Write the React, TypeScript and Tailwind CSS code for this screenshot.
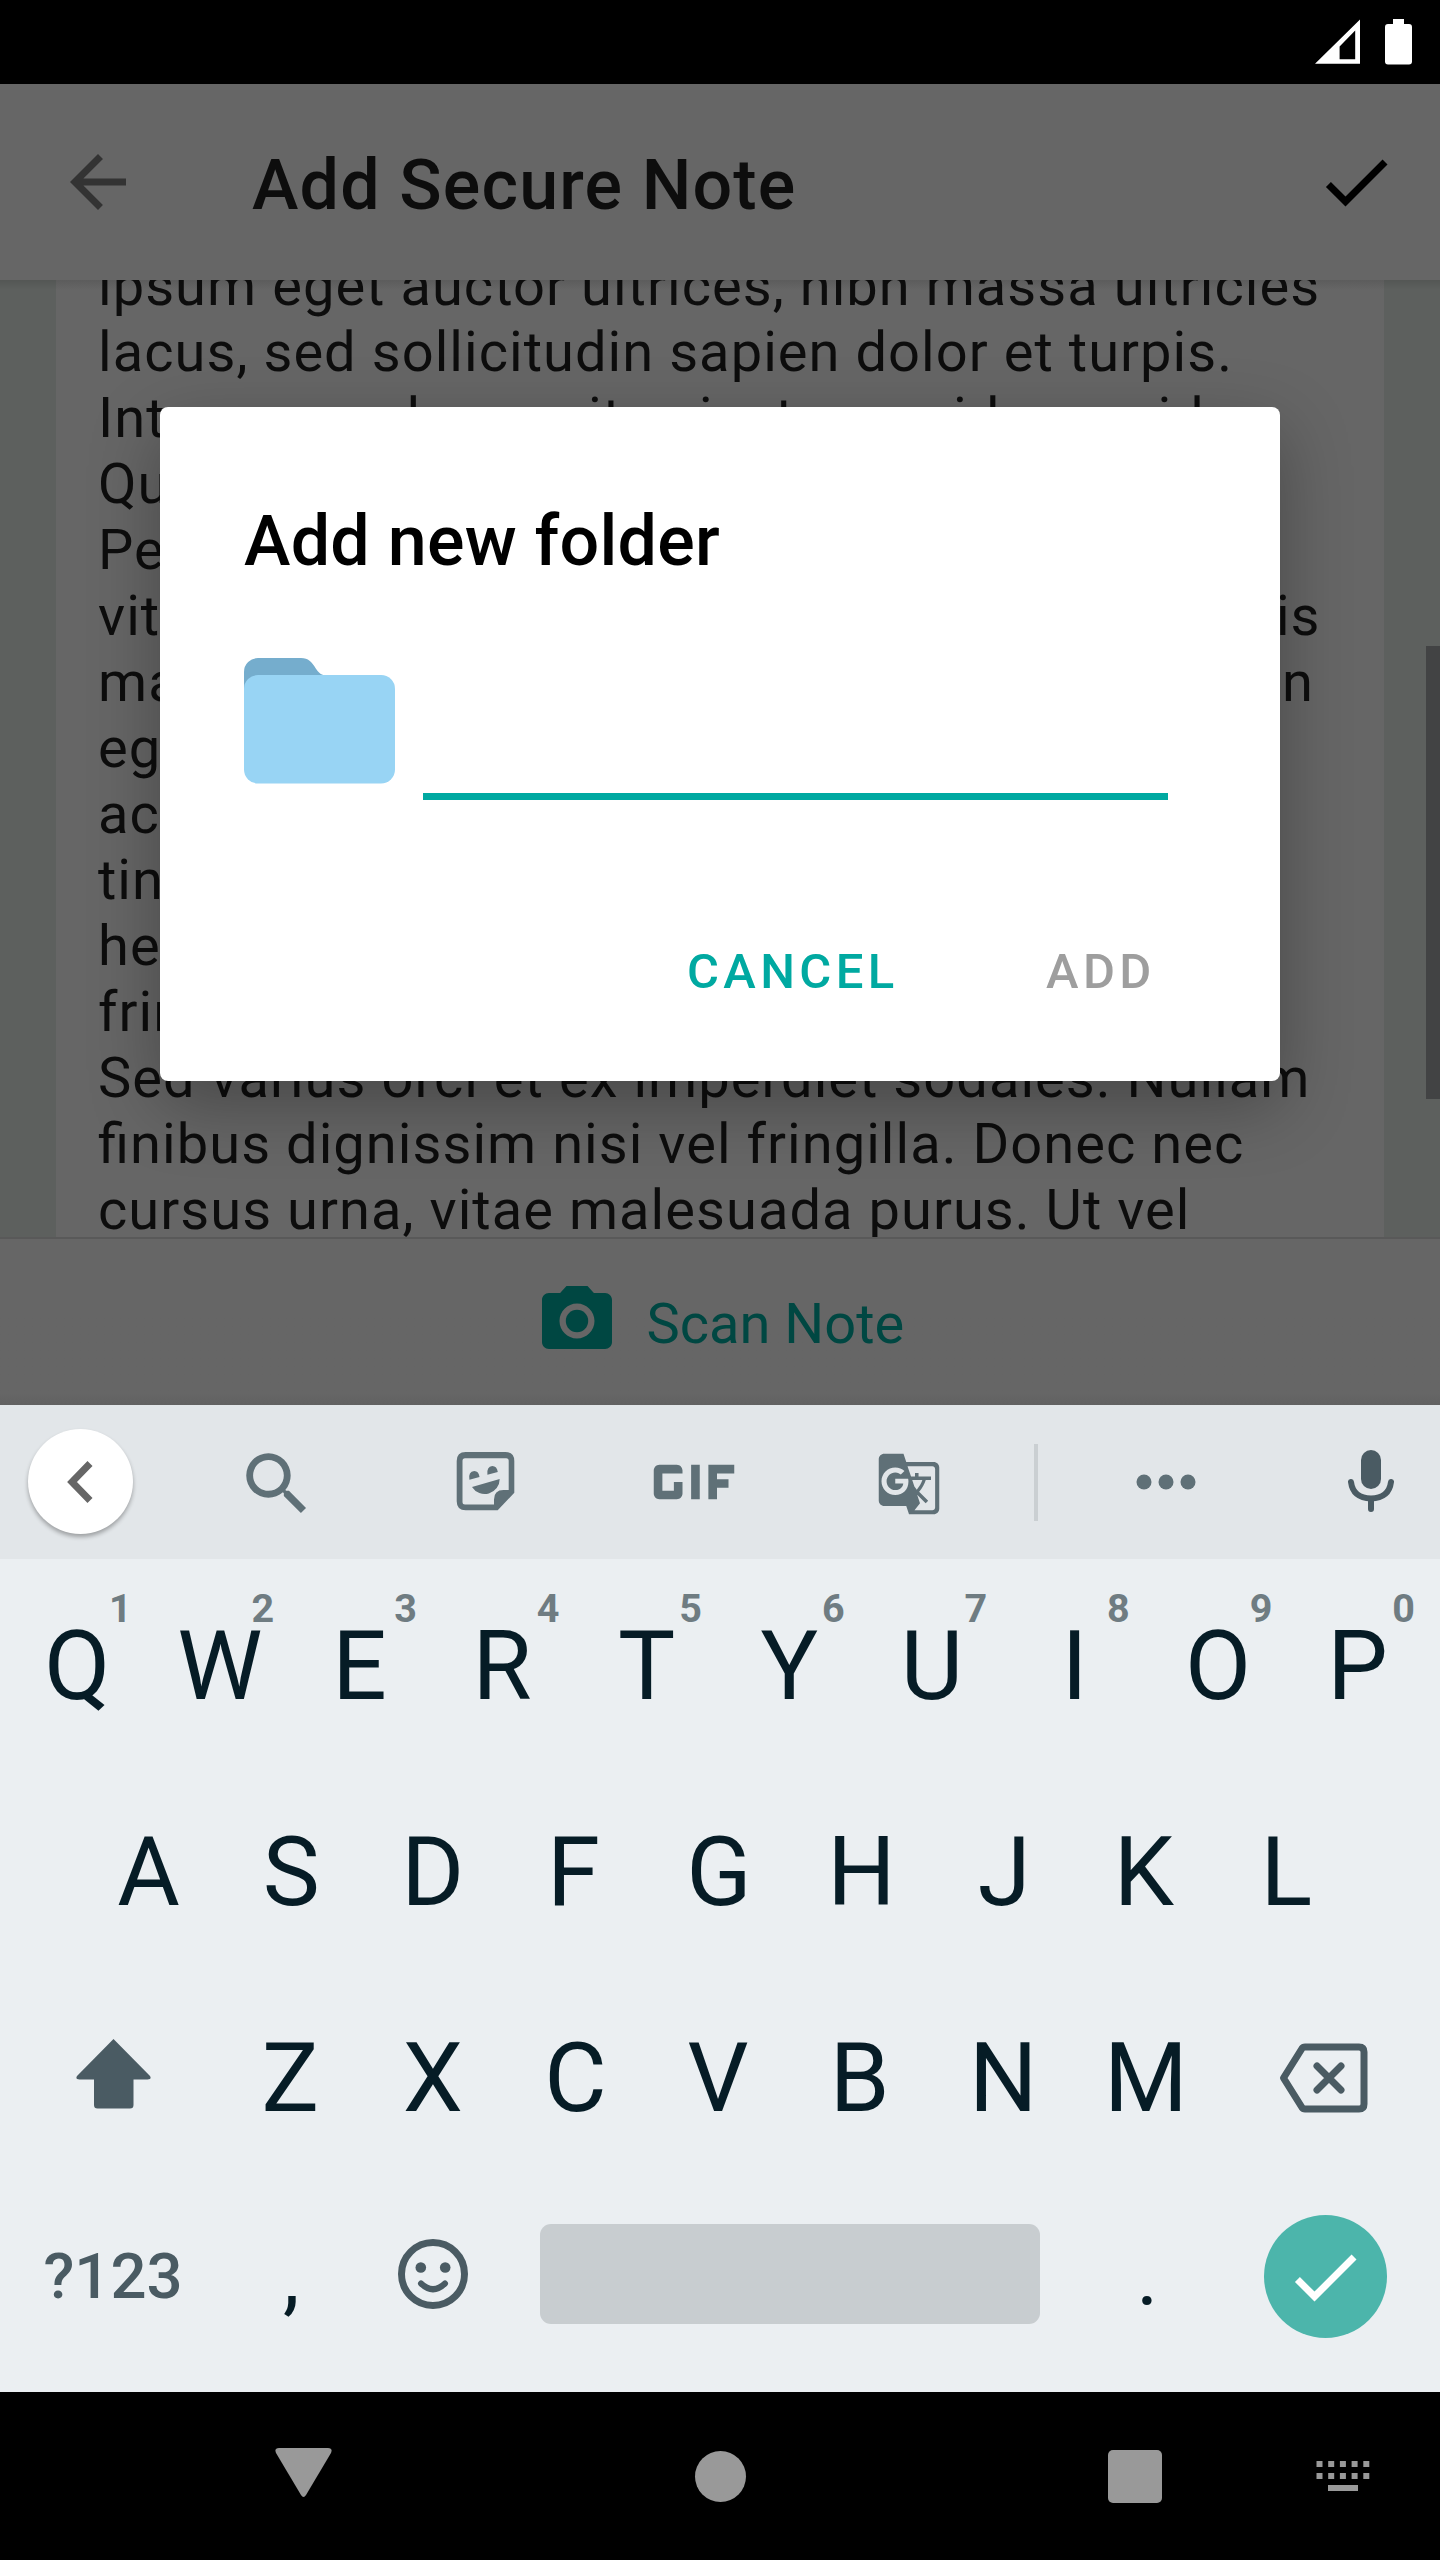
import React from 'react';
import { MdGif, MdGTranslate, MdSearch } from 'react-icons/md';

const LINES_TOP = [
  'ipsum eget auctor ultrices, nibh massa ultricies',
  'lacus, sed sollicitudin sapien dolor et turpis.',
  'Integer non lacus vitae justo gravida gravida',
  'Quisque',
  'Pellen',
];

const LINES_BOTTOM = [
  'eget',
  'ac',
  'tincidunt',
  'hendrerit',
  'fringilla',
  'Sed varius orci et ex imperdiet sodales. Nullam',
  'finibus dignissim nisi vel fringilla. Donec nec',
  'cursus urna, vitae malesuada purus. Ut vel',
];

const CHECK = 'M9 16.17L4.83 12l-1.42 1.41L9 19 21 7l-1.41-1.41z';

function StatusBar() {
  return (
    <header className="flex h-[84px] shrink-0 items-start justify-end bg-black pr-[28px] pt-[19px] text-white">
      <svg className="mr-[25px] h-[45px] w-[45px]" viewBox="0 0 45 45" fill="currentColor">
        <path fillRule="evenodd" d="M45 0.5V44.7H0ZM40.2 11.5L24.6 27.5V40.2H40.2Z" />
      </svg>
      <svg className="h-[46px] w-[27px]" viewBox="0 0 27 46" fill="currentColor">
        <path d="M8 0h11v5h5a3 3 0 0 1 3 3v34.500a3 3 0 0 1-3 3H3a3 3 0 0 1-3-3V8a3 3 0 0 1 3-3h5z" />
      </svg>
    </header>
  );
}

function Note() {
  return (
    <section className="relative h-[957px] shrink-0 overflow-hidden bg-[#5d605e] px-[56px]">
      <div className="h-full overflow-hidden bg-[#666666] pl-[42px]">
        <div className="-mt-[27px] text-[56px] leading-[66px] tracking-[1.050px] text-[#0d0d0d] [font-feature-settings:'liga'_1]">
          {LINES_TOP.map((l) => (
            <p key={l} className="whitespace-nowrap">{l}</p>
          ))}
          <p className="flex w-[1222.500px] justify-between"><span>vita</span><span>is</span></p>
          <p className="flex w-[1216px] justify-between"><span>mat</span><span>n</span></p>
          {LINES_BOTTOM.map((l) => (
            <p key={l} className="whitespace-nowrap">{l}</p>
          ))}
        </div>
      </div>
      <div className="absolute inset-x-0 top-0 h-[10px] bg-linear-to-b from-black/10 to-transparent" />
      <div className="absolute right-0 top-[366px] h-[453px] w-[14px] bg-[#424344]" />
    </section>
  );
}

function Dialog() {
  return (
    <div className="absolute left-[160px] top-[407px] flex h-[674px] w-[1120px] flex-col rounded-[8px] bg-white pl-[84px] shadow-[0_24px_70px_rgba(0,0,0,0.3)]">
      <h2 className="mt-[93px] text-[70px] font-medium leading-[82px] tracking-[0.250px] text-black">Add new folder</h2>
      <div className="mt-[76px] flex h-[142px] items-start">
        <svg className="h-[126px] w-[151px]" viewBox="0 0 151 126">
          <path d="M0 40V14A14 14 0 0 1 14 0H57C72 0 70 17 82 17.500V40Z" fill="#75adcd" />
          <rect y="17" width="151" height="108.500" rx="14" fill="#98d4f4" />
        </svg>
        <div className="ml-[28px] h-full w-[745px] border-b-[7px] border-[#00a9a1]" />
      </div>
      <div className="mt-[143px] flex gap-[147.500px] pl-[443px] text-[49px] font-medium leading-[58px] tracking-[4.370px]">
        <span className="text-[#00a9a1]">CANCEL</span>
        <span className="text-[#9e9e9e]">ADD</span>
      </div>
    </div>
  );
}

function Tools() {
  return (
    <div className="flex h-[154px] shrink-0 items-center bg-[#e2e6e9] pl-[28px] text-[#5f7077]">
      <div className="-mt-px flex h-[105px] w-[105px] items-center justify-center rounded-full bg-white text-[#666666] shadow-[0_3px_4px_rgba(0,0,0,0.3)]">
        <svg className="mr-[2px] h-[42px] w-[26px]" viewBox="0 0 26 42" fill="none" stroke="currentColor" strokeWidth="7">
          <path d="M23 2.500L5 21L23 39.500" />
        </svg>
      </div>
      <div className="ml-[103px] mt-[4px]">
        <MdSearch className="h-[82px] w-[82px]" />
      </div>
      <svg className="-mt-px ml-[135px] h-[64px] w-[64px] shrink-0" viewBox="0 0 64 64" fill="currentColor">
        <path fillRule="evenodd" d="M12.700 2H52.300Q61.300 2 61.300 11V42.700L44.700 60.300H12.700Q3.700 60.300 3.700 51.300V11Q3.700 2 12.700 2ZM12 8.300Q9.500 8.300 9.500 10.800V52Q9.500 54.500 12 54.500H41V49.500Q41 40 50.500 40H55.700V10.800Q55.700 8.300 53.200 8.300Z" />
        <path d="M16.400 29.700Q15 21.500 21.300 21Q25.800 21 26.500 27ZM34.400 24.700Q33.500 16.500 39.300 16Q44 16 44.800 22ZM46.700 29A15 15 0 0 1 19 37Z" />
      </svg>
      <div className="-mt-px ml-[136.500px] flex h-[34px] w-[81px] items-center justify-center">
        <MdGif className="h-[138px] w-[138px] shrink-0" />
      </div>
      <div className="ml-[141.500px] mt-[3px]">
        <MdGTranslate className="h-[66px] w-[66px]" />
      </div>
      <div className="ml-[92px] h-[77px] w-[4px] bg-[#cacfd2]" />
      <svg className="ml-[98px] h-[16px] w-[60px]" viewBox="0 0 60 16" fill="currentColor">
        <circle cx="8" cy="8" r="7.500" /><circle cx="30" cy="8" r="7.500" /><circle cx="52" cy="8" r="7.500" />
      </svg>
      <svg className="-mt-[2px] ml-[152px] h-[62px] w-[46px] text-[#4a5b63]" viewBox="0 0 46 62" fill="none" stroke="currentColor" strokeWidth="6" strokeLinecap="round">
        <rect x="13" y="0" width="20" height="39" rx="10" fill="currentColor" stroke="none" />
        <path d="M3 32Q5 48 23 48.500Q41 48 43 32M23 49V59" />
      </svg>
    </div>
  );
}

function Keys({ letters }: { letters: string }) {
  return (
    <>
      {letters.split('').map((c) => (
        <span
          key={c}
          className={`w-[142.600px] shrink-0 text-center ${'EFKRLP'.includes(c) ? 'pr-[6px]' : 'DBTYUI'.includes(c) ? 'pr-[2px]' : ''}`}
        >
          {c}
        </span>
      ))}
    </>
  );
}

function Keyboard() {
  return (
    <div className="flex h-[833px] shrink-0 flex-col bg-[#ebeff2] px-[6px] text-[96px] leading-[112px] text-[#061c26]">
      <div className="flex h-[45px] pl-[43px] pt-[27px] text-[39.500px] font-bold leading-[46px] text-[#6f7c82]">
        <Keys letters="1234567890" />
      </div>
      <div className="mt-[6px] flex h-[112px]"><Keys letters="QWERTYUIOP" /></div>
      <div className="mt-[94px] flex h-[112px] justify-center pr-[2px]"><Keys letters="ASDFGHJKL" /></div>
      <div className="mt-[94px] flex h-[112px]">
        <div className="flex w-[213px] items-center justify-center pl-px text-[#4a5b63]">
          <svg className="-mt-[8px] h-[70px] w-[75px]" viewBox="0 0 75 70" fill="currentColor">
            <path d="M37.500 0L74 37Q76 40.500 71.500 40.500H57.500V66Q57.500 69.500 54 69.500H21.500Q18 69.500 18 66V40.500H3.500Q-1 40.500 1 37Z" />
          </svg>
        </div>
        <Keys letters="ZXCVBNM" />
        <div className="flex w-[212px] items-center justify-center pl-px text-[#4a5b63]">
          <svg className="-mt-px h-[70px] w-[89px]" viewBox="0 0 89 70" fill="none" stroke="currentColor" strokeWidth="7" strokeLinejoin="round" strokeLinecap="round">
            <path d="M26 4H80Q85 4 85 9V61Q85 66 80 66H26Q24 66 23 64.500L4.500 35L23 5.500Q24 4 26 4Z" />
            <path d="M38 23L62 47M62 23L38 47" />
          </svg>
        </div>
      </div>
      <div className="mt-[80px] flex h-[126px] items-center">
        <span className="w-[214px] text-center text-[63.500px] font-medium leading-[74px] text-[#4a5b63]">?123</span>
        <span className="w-[142.600px] text-center text-[84px]">,</span>
        <span className="flex w-[142.600px] justify-center pr-[2px] text-[#4a5b63]">
          <svg className="-mt-[7px] h-[70px] w-[70px]" viewBox="0 0 70 70" fill="currentColor">
            <circle cx="35" cy="35" r="31.500" fill="none" stroke="currentColor" strokeWidth="7" />
            <circle cx="22.800" cy="28.500" r="5.300" /><circle cx="47.200" cy="28.500" r="5.300" />
            <path d="M23 44.500Q35 56 47 44.500" fill="none" stroke="currentColor" strokeWidth="6" strokeLinecap="round" />
          </svg>
        </span>
        <span className="-mt-[6px] ml-[34.800px] h-[100px] w-[500px] rounded-[11px] bg-[#c8cdd0]" />
        <span className="ml-[36px] w-[142.600px] text-center text-[84px]">.</span>
        <span className="-mt-px ml-[45px] flex h-[123px] w-[123px] items-center justify-center rounded-full bg-[#4cb5ab] text-white">
          <svg className="h-[84px] w-[84px]" viewBox="0 0 24 24" fill="currentColor"><path d={CHECK} /></svg>
        </span>
      </div>
    </div>
  );
}

function NavBar() {
  return (
    <nav className="flex h-[168px] shrink-0 items-center bg-black pl-[275px] text-[#999999]">
      <svg className="-mt-[7px] h-[49px] w-[57px]" viewBox="0 0 57 49" fill="currentColor">
        <path d="M4 0H53Q58 0 56 5L31 47Q28.500 51 26 47L1 5Q-1 0 4 0Z" />
      </svg>
      <div className="ml-[362.500px] h-[51px] w-[51px] rounded-full bg-[#999999]" />
      <div className="ml-[362.500px] h-[53px] w-[54px] rounded-[5px] bg-[#999999]" />
      <svg className="ml-[154px] h-[30px] w-[54px]" viewBox="0 0 54 30" fill="currentColor">
        {[0, 1, 2, 3, 4].map((i) => (
          <g key={i}>
            <rect x={0.5 + i * 11.7} y="0" width="6" height="6" />
            <rect x={0.5 + i * 11.7} y="12" width="6" height="6" />
          </g>
        ))}
        <rect x="12" y="24" width="30" height="6" />
      </svg>
    </nav>
  );
}

export default function App() {
  return (
    <main className="relative flex h-[2560px] w-[1440px] flex-col overflow-hidden bg-[#666666] font-[Roboto,sans-serif]">
      <StatusBar />
      <div className="flex h-[196px] shrink-0 items-center bg-[#666666] pl-[56px] pr-[42px]">
        <svg className="h-[84px] w-[84px] text-[#333333]" viewBox="0 0 24 24" fill="currentColor">
          <path d="M20 11H7.830l5.590-5.590L12 4l-8 8 8 8 1.410-1.410L7.830 13H20v-2z" />
        </svg>
        <h1 className="ml-[112px] mt-[5px] flex-1 text-[70px] font-medium leading-[82px] tracking-[1.150px] text-[#0d0d0d]">Add Secure Note</h1>
        <svg className="h-[84px] w-[84px] text-black" viewBox="0 0 24 24" fill="currentColor"><path d={CHECK} /></svg>
      </div>
      <Note />
      <div className="flex h-[168px] shrink-0 border-t-2 border-[#595959] bg-linear-to-b from-[#666666] from-93% to-[#616161] pl-[535px] text-[#004742]">
        <svg className="mt-[40px] h-[84px] w-[84px]" viewBox="0 0 24 24" fill="currentColor">
          <circle cx="12" cy="12" r="3.200" />
          <path d="M9 2L7.170 4H4c-1.100 0-2 .9-2 2v12c0 1.100.9 2 2 2h16c1.100 0 2-.9 2-2V6c0-1.100-.9-2-2-2h-3.170L15 2H9zm3 15c-2.760 0-5-2.240-5-5s2.240-5 5-5 5 2.240 5 5-2.240 5-5 5z" />
        </svg>
        <span className="ml-[27.500px] mt-[52px] text-[56px] leading-[66px]">Scan Note</span>
      </div>
      <Tools />
      <Keyboard />
      <NavBar />
      <Dialog />
    </main>
  );
}
